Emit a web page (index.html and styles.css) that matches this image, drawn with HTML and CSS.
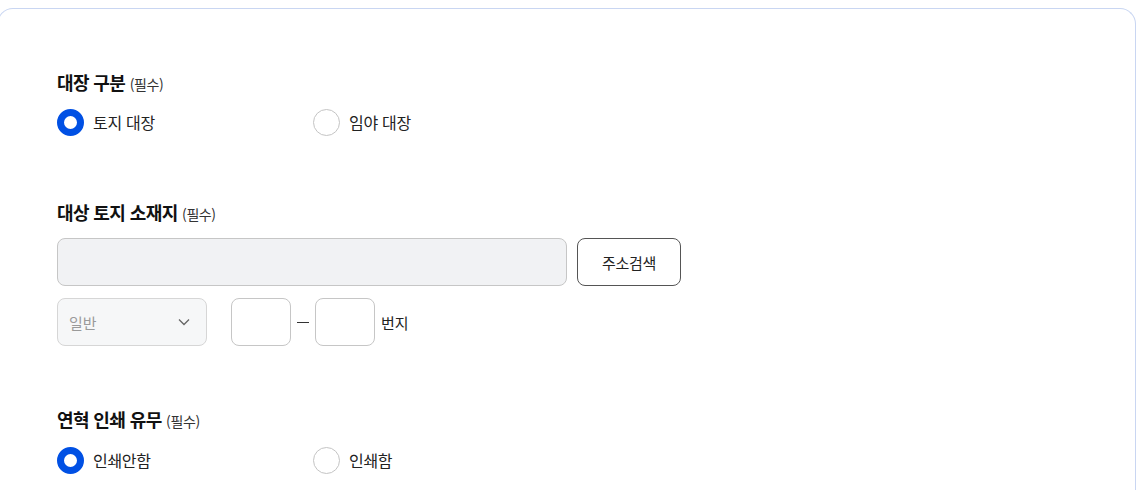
FILE: index.html
```html
<!DOCTYPE html>
<html lang="ko">
<head>
<meta charset="utf-8">
<link rel="stylesheet" href="styles.css">
</head>
<body>
<div class="card">
  <section class="section s1">
    <h2 class="title">대장 구분 <span class="req">(필수)</span></h2>
    <div class="radios">
      <label class="radio"><span class="dot on"></span><span class="rlabel">토지 대장</span></label>
      <label class="radio"><span class="dot"></span><span class="rlabel">임야 대장</span></label>
    </div>
  </section>
  <section class="section s2">
    <h2 class="title">대상 토지 소재지 <span class="req">(필수)</span></h2>
    <div class="row">
      <div class="addr"></div>
      <button class="btn">주소검색</button>
    </div>
    <div class="row row2">
      <div class="select"><span>일반</span>
        <svg class="chev" width="12" height="8" viewBox="0 0 12 8"><path d="M1 1.5 L6 6.5 L11 1.5" fill="none" stroke="#666" stroke-width="1.3"/></svg>
      </div>
      <div class="lot">
        <div class="box"></div>
        <span class="dash"></span>
        <div class="box"></div>
        <span class="unit">번지</span>
      </div>
    </div>
  </section>
  <section class="section s3">
    <h2 class="title">연혁 인쇄 유무 <span class="req">(필수)</span></h2>
    <div class="radios">
      <label class="radio"><span class="dot on"></span><span class="rlabel">인쇄안함</span></label>
      <label class="radio"><span class="dot"></span><span class="rlabel">인쇄함</span></label>
    </div>
  </section>
</div>
</body>
</html>
```
FILE: styles.css
```css
* { box-sizing: border-box; }
html, body { margin: 0; padding: 0; background: #fff; }
body {
  font-family: "Noto Sans CJK KR", "Noto Sans", sans-serif;
  color: #222;
  padding-top: 8px;
  height: 490px;
  overflow: hidden;
}
.card {
  margin-left: -3px;
  width: 1139px;
  height: 482px;
  border: 1px solid #c9d6f2;
  border-bottom: none;
  border-radius: 16px 16px 0 0;
  padding: 61px 0 0 59px;
}
.title {
  margin: 0 0 14px;
  font-size: 18px;
  font-weight: 700;
  line-height: 24px;
  height: 24px;
  color: #111;
  letter-spacing: -0.6px;
}
.req {
  font-size: 14px;
  font-weight: 400;
  color: #333;
  letter-spacing: -0.4px;
}
.s1 { margin-bottom: 64px; }
.s2 { margin-bottom: 61px; }
.s3 .title { margin-bottom: 15px; }
.radios { display: flex; height: 28px; }
.radio { display: flex; align-items: center; width: 256px; }
.dot {
  width: 27px; height: 27px;
  border-radius: 50%;
  border: 1px solid #c4c4c4;
  background: #fff;
  flex: none;
}
.dot.on { border: 7.5px solid #0050e4; }
.rlabel {
  margin-left: 9px;
  font-size: 16px;
  color: #222;
  letter-spacing: -0.3px;
}
.row { display: flex; gap: 10px; }
.row2 { margin-top: 12px; gap: 24px; }
.addr {
  width: 510px; height: 48px;
  background: #f1f2f4;
  border: 1px solid #c6c6c6;
  border-radius: 8px;
}
.btn {
  width: 104px; height: 48px;
  background: #fff;
  border: 1px solid #555;
  border-radius: 8px;
  font-family: inherit;
  font-size: 15px;
  color: #222;
  padding: 0;
  letter-spacing: -0.3px;
}
.select {
  width: 150px; height: 48px;
  background: #f6f7f8;
  border: 1px solid #d6d6d6;
  border-radius: 8px;
  display: flex; align-items: center; justify-content: space-between;
  padding: 0 16px 0 11px;
  font-size: 15px;
  color: #9a9a9a;
}
.chev { display: block; }
.lot { display: flex; align-items: center; }
.box {
  width: 60px; height: 48px;
  border: 1px solid #c6c6c6;
  border-radius: 8px;
  background: #fff;
}
.dash {
  width: 12px; height: 1px;
  background: #333;
  margin: 0 6px;
}
.unit { margin-left: 6px; font-size: 15px; color: #222; }
```
